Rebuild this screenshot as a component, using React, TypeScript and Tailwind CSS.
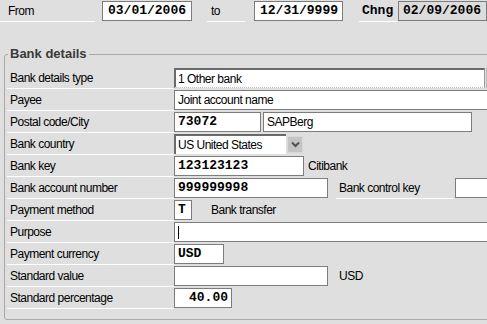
import React from "react";

const sans = "font-['Liberation_Sans',Arial,sans-serif] text-[12px] tracking-[-0.5px] text-black";
const mono = "font-['Liberation_Mono','DejaVu_Sans_Mono',monospace] font-bold text-[13px] text-black";

const Field: React.FC<{
    width: string;
    value?: string;
    bold?: boolean;
    right?: boolean;
    cursor?: boolean;
}> = ({ width, value, bold, right, cursor }) => (
    <div
        className={`${width} h-[20px] shrink-0 border border-[#7c7c7c] bg-white flex items-center px-[3px] ${
            right ? "justify-end" : "justify-start"
        } ${bold ? mono : sans}`}
    >
        {cursor && <span className="w-px h-[13px] bg-black" />}
        {value}
    </div>
);

const Row: React.FC<{ label: string; children?: React.ReactNode }> = ({ label, children }) => (
    <div className="flex h-[22px] items-center">
        <div className={`w-[167px] h-[22px] shrink-0 border-b border-white flex items-center pl-[3px] ${sans}`}>
            {label}
        </div>
        <div className="flex items-center h-[22px]">{children}</div>
    </div>
);

export default function App() {
    return (
        <div className="w-[487px] h-[324px] overflow-hidden bg-[#dfdfdf]">
            {/* validity row */}
            <div className="flex h-[22px] items-start pt-[1px] [&>*]:shrink-0">
                <div className={`w-[95px] h-[21px] border-b border-white pl-[8px] flex items-center ${sans}`}>From</div>
                <div className="w-[7px]" />
                <div className={`w-[90px] h-[20px] border border-[#7c7c7c] bg-white flex items-center pl-[5px] ${mono}`}>
                    03/01/2006
                </div>
                <div className="w-[15px]" />
                <div className={`w-[38px] h-[21px] border-b border-white pl-[4px] flex items-center ${sans}`}>to</div>
                <div className="w-[9px]" />
                <div className={`w-[89px] h-[20px] border border-[#7c7c7c] bg-white flex items-center pl-[5px] ${mono}`}>
                    12/31/9999
                </div>
                <div className="w-[16px]" />
                <div className={`w-[39px] h-[21px] border-b border-white pl-[3px] flex items-center ${mono}`}>Chng</div>
                <div className={`w-[89px] h-[20px] border border-[#7c7c7c] bg-[#dcdcdc] flex items-center pl-[4px] ${mono}`}>
                    02/09/2006
                </div>
            </div>

            <fieldset className="mt-[24px] ml-[4px] w-[530px] h-[274px] border border-[#a9a9a9] rounded-[3px] pl-[2px] pt-[5px]">
                <legend className="ml-[1px] px-[2px] font-['Liberation_Sans',Arial,sans-serif] font-bold text-[13px] leading-[16px] text-[#3a3a3a]">
                    Bank details
                </legend>

                <Row label="Bank details type">
                    <div className={`w-[311px] h-[20px] shrink-0 bg-white border-t-2 border-l-2 border-[#6a6a6a] border-r border-r-[#9a9a9a] border-b border-b-[#bdbdbd] [border-bottom-style:dotted] flex items-center pl-[2px] ${sans}`}>
                        1 Other bank
                    </div>
                    <div className="ml-[1px] w-[8px] h-[20px] shrink-0 bg-[#b8b8b8]" />
                </Row>
                <Row label="Payee">
                    <Field width="w-[340px]" value="Joint account name" />
                </Row>
                <Row label="Postal code/City">
                    <Field width="w-[87px]" value="73072" bold />
                    <div className="w-[2px] shrink-0" />
                    <Field width="w-[209px]" value="SAPBerg" />
                </Row>
                <Row label="Bank country">
                    <div className={`w-[112px] h-[20px] shrink-0 bg-white border-t-2 border-l-2 border-[#6a6a6a] flex items-center pl-[2px] ${sans}`}>
                        US United States
                    </div>
                    <div className="ml-[1px] w-[16px] h-[17px] shrink-0 bg-[#c4c4c4] border border-[#d8d8d8] flex items-center justify-center">
                        <svg width="9" height="7" viewBox="0 0 9 7">
                            <path d="M1 1.5 L4.5 5 L8 1.5" stroke="#505050" strokeWidth="2" fill="none" />
                        </svg>
                    </div>
                </Row>
                <Row label="Bank key">
                    <Field width="w-[130px]" value="123123123" bold />
                    <span className={`ml-[4px] ${sans}`}>Citibank</span>
                </Row>
                <Row label="Bank account number">
                    <Field width="w-[154px]" value="999999998" bold />
                    <div className={`ml-[8px] w-[117px] h-[22px] shrink-0 border-b border-white flex items-center pl-[3px] ${sans}`}>
                        Bank control key
                    </div>
                    <div className="w-[2px] shrink-0" />
                    <Field width="w-[60px]" />
                </Row>
                <Row label="Payment method">
                    <Field width="w-[18px]" value="T" bold />
                    <span className={`ml-[19px] ${sans}`}>Bank transfer</span>
                </Row>
                <Row label="Purpose">
                    <Field width="w-[340px]" cursor />
                </Row>
                <Row label="Payment currency">
                    <Field width="w-[50px]" value="USD" bold />
                </Row>
                <Row label="Standard value">
                    <Field width="w-[154px]" />
                    <span className={`ml-[11px] ${sans}`}>USD</span>
                </Row>
                <Row label="Standard percentage">
                    <Field width="w-[58px]" value="40.00" bold right />
                </Row>
            </fieldset>
        </div>
    );
}
